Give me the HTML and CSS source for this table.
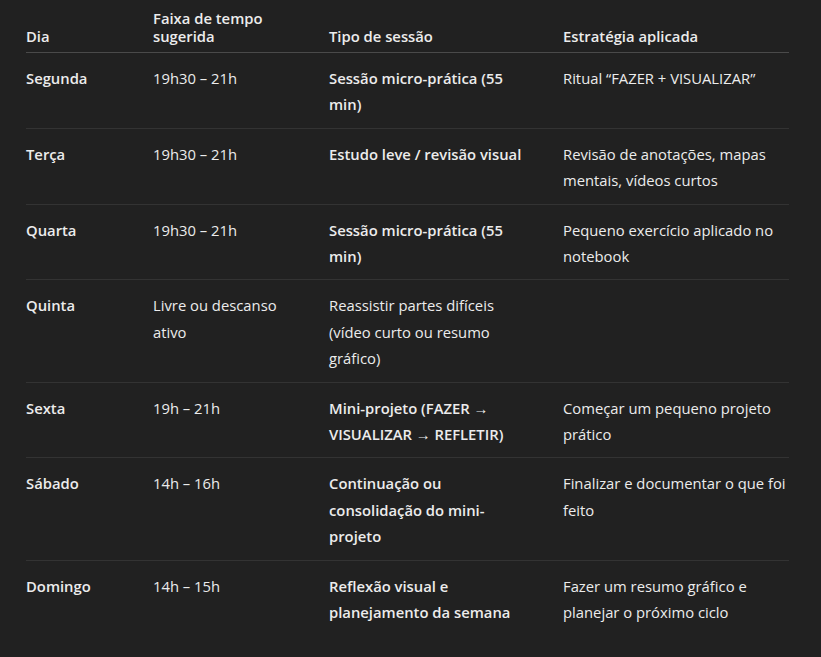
FILE: index.html
```html
<!DOCTYPE html>
<html lang="pt">
<head>
<meta charset="utf-8">
<title>Plano semanal</title>
<link rel="stylesheet" href="styles.css">
</head>
<body>
<div class="wrap">
<table class="plan">
  <colgroup>
    <col class="c1"><col class="c2"><col class="c3"><col class="c4">
  </colgroup>
  <thead>
    <tr>
      <th>Dia</th>
      <th>Faixa de tempo sugerida</th>
      <th>Tipo de sessão</th>
      <th>Estratégia aplicada</th>
    </tr>
  </thead>
  <tbody>
    <tr>
      <td><strong>Segunda</strong></td>
      <td>19h30 – 21h</td>
      <td><strong>Sessão micro-prática (55 min)</strong></td>
      <td>Ritual “FAZER + VISUALIZAR”</td>
    </tr>
    <tr>
      <td><strong>Terça</strong></td>
      <td>19h30 – 21h</td>
      <td><strong>Estudo leve / revisão visual</strong></td>
      <td>Revisão de anotações, mapas mentais, vídeos curtos</td>
    </tr>
    <tr>
      <td><strong>Quarta</strong></td>
      <td>19h30 – 21h</td>
      <td><strong>Sessão micro-prática (55 min)</strong></td>
      <td>Pequeno exercício aplicado no notebook</td>
    </tr>
    <tr>
      <td><strong>Quinta</strong></td>
      <td>Livre ou descanso ativo</td>
      <td>Reassistir partes difíceis (vídeo curto ou resumo gráfico)</td>
      <td></td>
    </tr>
    <tr>
      <td><strong>Sexta</strong></td>
      <td>19h – 21h</td>
      <td><strong>Mini-projeto (FAZER → VISUALIZAR → REFLETIR)</strong></td>
      <td>Começar um pequeno projeto prático</td>
    </tr>
    <tr>
      <td><strong>Sábado</strong></td>
      <td>14h – 16h</td>
      <td><strong>Continuação ou consolidação do mini-projeto</strong></td>
      <td>Finalizar e documentar o que foi feito</td>
    </tr>
    <tr>
      <td><strong>Domingo</strong></td>
      <td>14h – 15h</td>
      <td><strong>Reflexão visual e planejamento da semana</strong></td>
      <td>Fazer um resumo gráfico e planejar o próximo ciclo</td>
    </tr>
  </tbody>
</table>
</div>
</body>
</html>
```

FILE: styles.css
```css
html, body {
  margin: 0;
  padding: 0;
  background: #212121;
}
body {
  color: #ececec;
  font-family: "Open Sans", "Noto Sans", "Liberation Sans", sans-serif;
  font-size: 14.8px;
}
.wrap {
  padding: 0 32px 0 26px;
}
.plan {
  width: 763px;
  table-layout: fixed;
  border-collapse: collapse;
  border-spacing: 0;
}
.c1 { width: 127px; }
.c2 { width: 176px; }
.c3 { width: 234px; }
.c4 { width: 226px; }
.plan th {
  text-align: left;
  vertical-align: bottom;
  font-weight: 600;
  line-height: 18px;
  padding: 9px 36px 7px 0;
  border-bottom: 1px solid #4a4a4a;
}
.plan td {
  text-align: left;
  vertical-align: top;
  line-height: 26.4px;
  padding: 12px 36px 10px 0;
  border-bottom: 1px solid #333333;
}
.plan th:last-child, .plan td:last-child { padding-right: 0; }
.plan tbody tr:last-child td { border-bottom: none; }
.plan strong { font-weight: 600; }
```
